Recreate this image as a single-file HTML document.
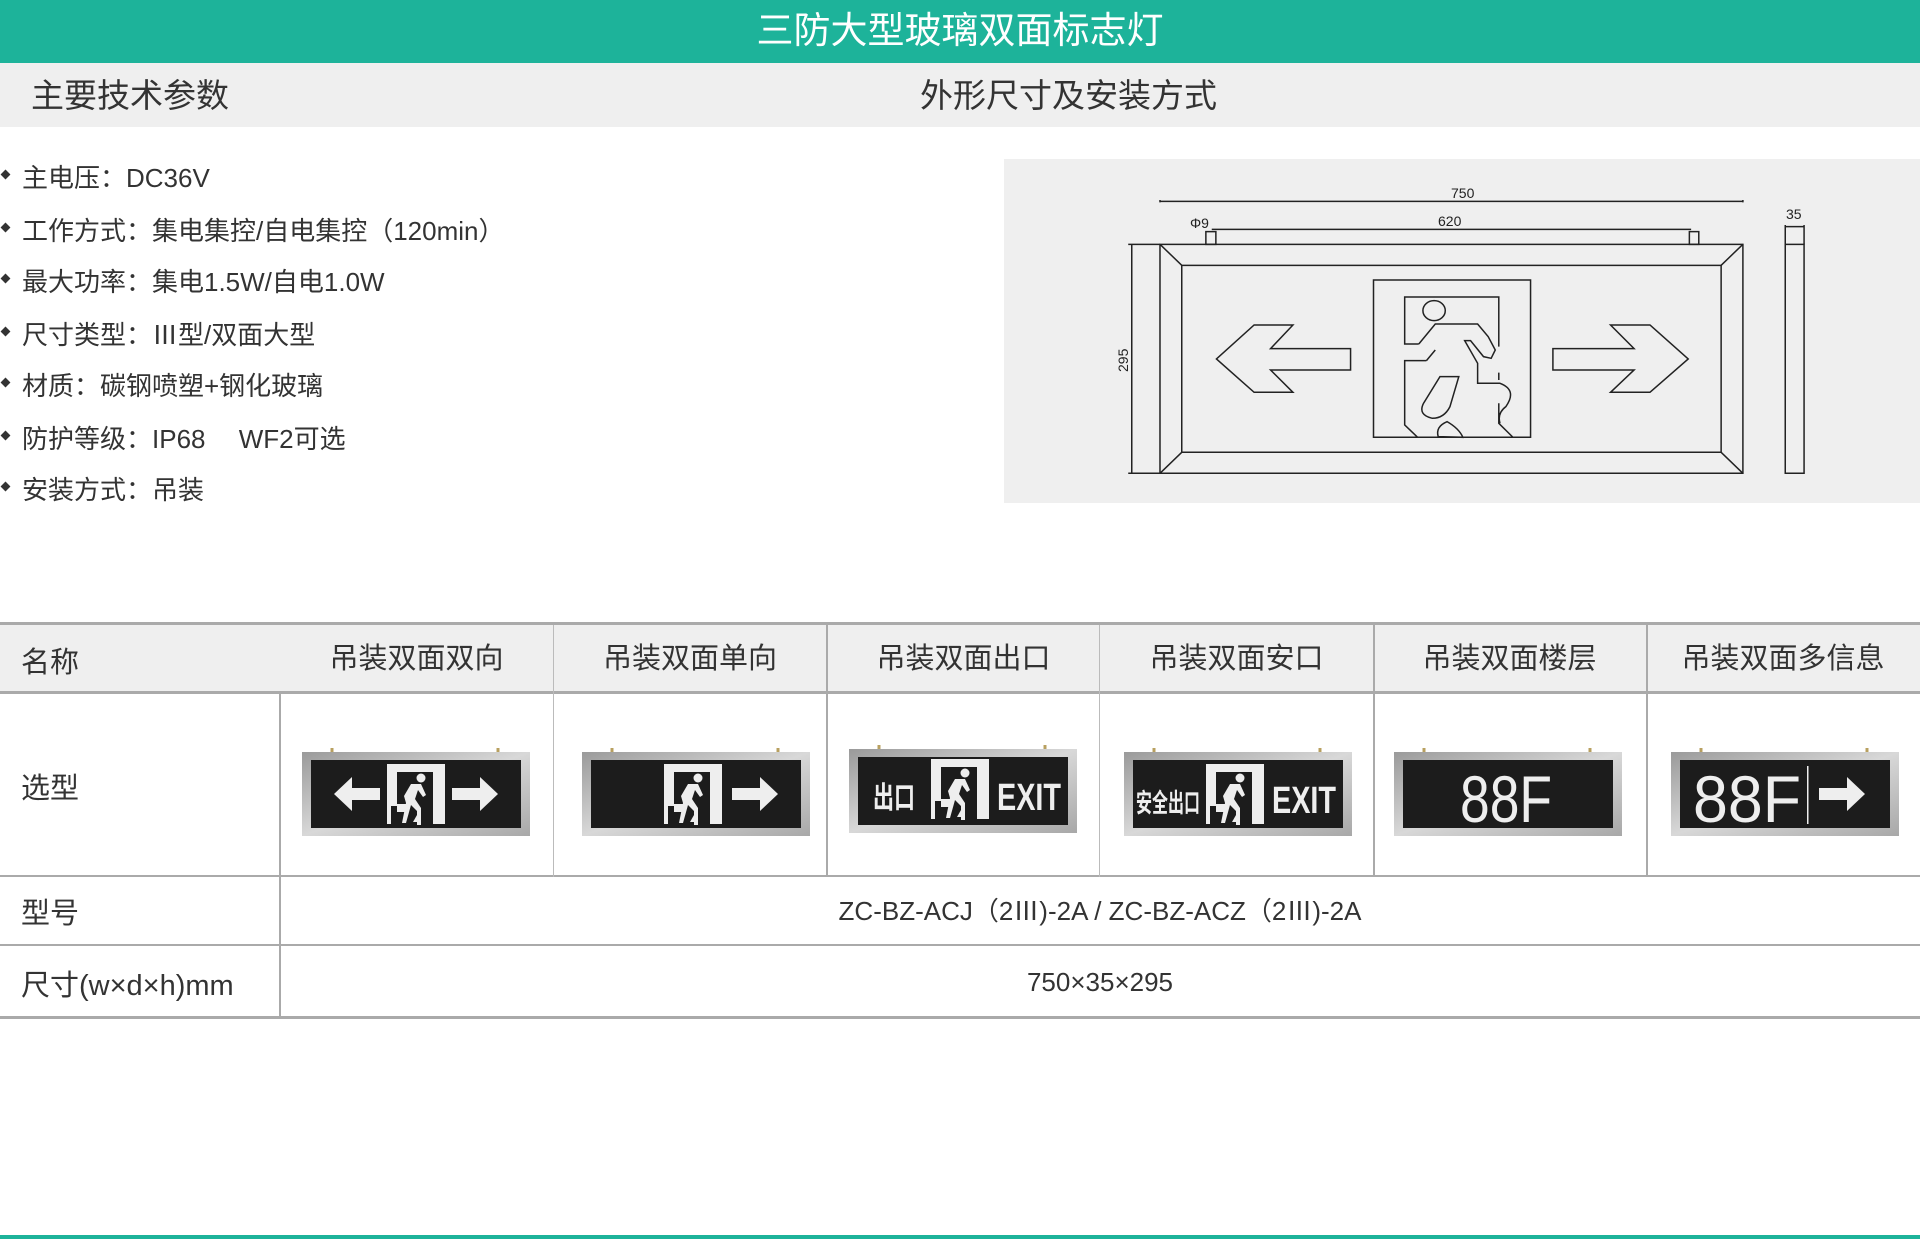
<!DOCTYPE html>
<html><head><meta charset="utf-8"><style>
*{margin:0;padding:0;box-sizing:border-box}
body{width:1920px;height:1241px;position:relative;background:#fff;font-family:"Liberation Sans","Noto Sans CJK SC",sans-serif;color:#333;overflow:hidden}
.a{position:absolute;white-space:nowrap}
.hl{position:absolute;background:#aaa}
.c{position:absolute;text-align:center;font-size:29px;line-height:29px}
.li{font-size:26px;left:22px}
.li:before{content:"";position:absolute;left:-20px;top:13px;width:7px;height:7px;background:#333;transform:rotate(45deg)}
</style></head><body>
<div class="a" style="left:0;top:0;width:1920px;height:63px;background:#1db39a"></div>
<div class="a" style="left:0;top:10px;width:1920px;text-align:center;color:#fff;font-size:37px;line-height:42px">三防大型玻璃双面标志灯</div>
<div class="a" style="left:0;top:63px;width:1920px;height:64px;background:#efefef"></div>
<div class="a" style="left:31px;top:78px;font-size:33px;line-height:36px">主要技术参数</div>
<div class="a" style="left:920px;top:78px;font-size:33px;line-height:36px">外形尺寸及安装方式</div>

<div class="a li" style="top:158px">主电压：DC36V</div>
<div class="a li" style="top:211px">工作方式：集电集控/自电集控（120min）</div>
<div class="a li" style="top:262px">最大功率：集电1.5W/自电1.0W</div>
<div class="a li" style="top:315px">尺寸类型：Ⅲ型/双面大型</div>
<div class="a li" style="top:366px">材质：碳钢喷塑+钢化玻璃</div>
<div class="a li" style="top:419px">防护等级：IP68　 WF2可选</div>
<div class="a li" style="top:470px">安装方式：吊装</div>

<div class="a" style="left:1004px;top:159px;width:916px;height:344px;background:#efefef"></div>
<svg class="a" style="left:0;top:0" width="1920" height="1241">
<g fill="none" stroke="#222" stroke-width="1.5">
<g transform="translate(1000,150) scale(0.5882,0.3333)">
<rect x="272" y="283" width="991" height="687" vector-effect="non-scaling-stroke"/>
<rect x="309" y="346" width="917" height="561" vector-effect="non-scaling-stroke"/>
<path d="M272 283L309 346M1263 283L1226 346M272 970L309 907M1263 970L1226 907" vector-effect="non-scaling-stroke"/>
<rect x="635" y="390" width="267" height="472" vector-effect="non-scaling-stroke"/>
<path d="M368 627L432 525H498L460 596H596V660H460L498 727H432Z" vector-effect="non-scaling-stroke"/>
<path d="M1170 627L1105 525H1038L1078 596H940V660H1078L1038 727H1105Z" vector-effect="non-scaling-stroke"/>
<path d="M712 582H688V441H848V590M848 690V668M848 760L848 820L872 862H902M710 862L688 825V632H725" vector-effect="non-scaling-stroke"/>
<ellipse cx="738" cy="482" rx="19" ry="30" vector-effect="non-scaling-stroke"/>
<path d="M712 582L740 522H812L830 560L842 600L835 625L822 620L800 572H790L812 640V700H850Q880 720 860 770Q845 790 850 820M740 600L725 632M780 680L765 770Q755 805 735 805Q710 795 720 760L748 680Z" vector-effect="non-scaling-stroke"/>
<path d="M745 860Q740 830 760 815Q780 835 787 862Z" vector-effect="non-scaling-stroke"/>
<path d="M272 150V157M1263 150V157M272 154H1263M360 238H1175M224 283V970M218 283H272M218 970H272" vector-effect="non-scaling-stroke"/>
<rect x="1335" y="283" width="32" height="687" vector-effect="non-scaling-stroke"/>
<path d="M1335 225V283M1367 225V283M1335 230H1367M350 245H367V283H350ZM1172 245H1188V283H1172Z" vector-effect="non-scaling-stroke"/>
</g></g>
<g font-family="Liberation Sans" font-size="14" fill="#222">
<text x="1451" y="198">750</text>
<text x="1438" y="226">620</text>
<text x="1190" y="228">Φ9</text>
<text x="1786" y="219">35</text>
<text transform="translate(1128,372) rotate(-90)">295</text>
</g>
</svg>

<div class="a" style="left:0;top:623px;width:1920px;height:69px;background:#efefef"></div>
<div class="hl" style="left:0;top:622px;width:1920px;height:3px"></div>
<div class="hl" style="left:0;top:691px;width:1920px;height:3px"></div>
<div class="hl" style="left:0;top:875px;width:1920px;height:2px"></div>
<div class="hl" style="left:0;top:944px;width:1920px;height:2px"></div>
<div class="hl" style="left:0;top:1016px;width:1920px;height:3px"></div>
<div class="hl" style="left:279px;top:693px;width:2px;height:325px"></div>
<div class="hl" style="left:553px;top:625px;width:1px;height:252px;background:#bbb"></div>
<div class="hl" style="left:826px;top:625px;width:2px;height:252px"></div>
<div class="hl" style="left:1099px;top:625px;width:1px;height:252px;background:#bbb"></div>
<div class="hl" style="left:1373px;top:625px;width:2px;height:252px"></div>
<div class="hl" style="left:1646px;top:625px;width:2px;height:252px"></div>
<div class="a" style="left:0;top:1235px;width:1920px;height:4px;background:#1db39a"></div>

<div class="a" style="left:21px;top:639px;font-size:29px">名称</div>
<div class="c" style="left:280px;top:645px;width:273px">吊装双面双向</div>
<div class="c" style="left:553px;top:645px;width:274px">吊装双面单向</div>
<div class="c" style="left:827px;top:645px;width:273px">吊装双面出口</div>
<div class="c" style="left:1100px;top:645px;width:273px">吊装双面安口</div>
<div class="c" style="left:1373px;top:645px;width:273px">吊装双面楼层</div>
<div class="c" style="left:1646px;top:645px;width:274px">吊装双面多信息</div>
<div class="a" style="left:21px;top:765px;font-size:29px">选型</div>
<div class="a" style="left:21px;top:890px;font-size:29px">型号</div>
<div class="a" style="left:21px;top:962px;font-size:29px">尺寸(w×d×h)mm</div>
<div class="c" style="left:280px;top:897px;width:1640px;font-size:26px">ZC-BZ-ACJ（2Ⅲ)-2A / ZC-BZ-ACZ（2Ⅲ)-2A</div>
<div class="c" style="left:280px;top:968px;width:1640px;font-size:26px">750×35×295</div>

<svg width="0" height="0" style="position:absolute">
<defs>
<linearGradient id="fr" x1="0" y1="0" x2="1" y2="1"><stop offset="0" stop-color="#9a9a9a"/><stop offset=".5" stop-color="#d8d8d8"/><stop offset="1" stop-color="#a8a8a8"/></linearGradient>
<g id="frame"><path d="M30 14v-4M196 14v-4" stroke="#b8a060" stroke-width="3"/><rect x="0" y="14" width="228" height="84" fill="url(#fr)"/><rect x="9" y="22" width="210" height="68" fill="#1c1c1c"/></g>
<g id="door"><rect x="0" y="0" width="58" height="60" fill="#eee"/><rect x="10" y="8" width="36" height="52" fill="#1c1c1c"/><rect x="4" y="42" width="8" height="18" fill="#1c1c1c"/><circle cx="34" cy="14" r="4.5" fill="#eee"/><path d="M17 32l7-12h10l5 11-3 2-5-7-3 9 6 9v17h-4v-14l-6-6-5 18h-4l4-20z" fill="#eee"/><rect x="10" y="40" width="11" height="8" fill="#eee"/><path d="M26 58l4-7 4 7z" fill="#eee"/></g>
<path id="ra" d="M0 -6H28V-17L46 0L28 17V6H0Z" fill="#eee"/>
</defs></svg>

<svg class="a" style="left:302px;top:738px" width="228" height="100"><use href="#frame"/><use href="#door" x="85" y="26"/><use href="#ra" transform="translate(78,56) scale(-1,1)"/><use href="#ra" x="150" y="56"/></svg>
<svg class="a" style="left:582px;top:738px" width="228" height="100"><use href="#frame"/><use href="#door" x="82" y="26"/><use href="#ra" x="150" y="56"/></svg>
<svg class="a" style="left:849px;top:735px" width="228" height="100"><use href="#frame"/><use href="#door" x="82" y="24"/><text x="24" y="73" fill="#eee" font-family="Noto Sans CJK SC" font-weight="bold" font-size="30" textLength="42" lengthAdjust="spacingAndGlyphs">出口</text><text x="148" y="75" fill="#eee" font-family="Liberation Sans" font-weight="bold" font-size="38" textLength="64" lengthAdjust="spacingAndGlyphs">EXIT</text></svg>
<svg class="a" style="left:1124px;top:738px" width="228" height="100"><use href="#frame"/><use href="#door" x="82" y="26"/><text x="12" y="74" fill="#eee" font-family="Noto Sans CJK SC" font-weight="bold" font-size="26" textLength="64" lengthAdjust="spacingAndGlyphs">安全出口</text><text x="148" y="75" fill="#eee" font-family="Liberation Sans" font-weight="bold" font-size="38" textLength="64" lengthAdjust="spacingAndGlyphs">EXIT</text></svg>
<svg class="a" style="left:1394px;top:738px" width="228" height="100"><use href="#frame"/><text x="66" y="84" fill="#eee" font-family="Liberation Sans" font-size="66" textLength="92" lengthAdjust="spacingAndGlyphs">88F</text></svg>
<svg class="a" style="left:1671px;top:738px" width="228" height="100"><use href="#frame"/><text x="22" y="84" fill="#eee" font-family="Liberation Sans" font-size="66" textLength="108" lengthAdjust="spacingAndGlyphs">88F</text><rect x="136" y="28" width="1.5" height="58" fill="#eee"/><use href="#ra" x="148" y="56"/></svg>
</body></html>
